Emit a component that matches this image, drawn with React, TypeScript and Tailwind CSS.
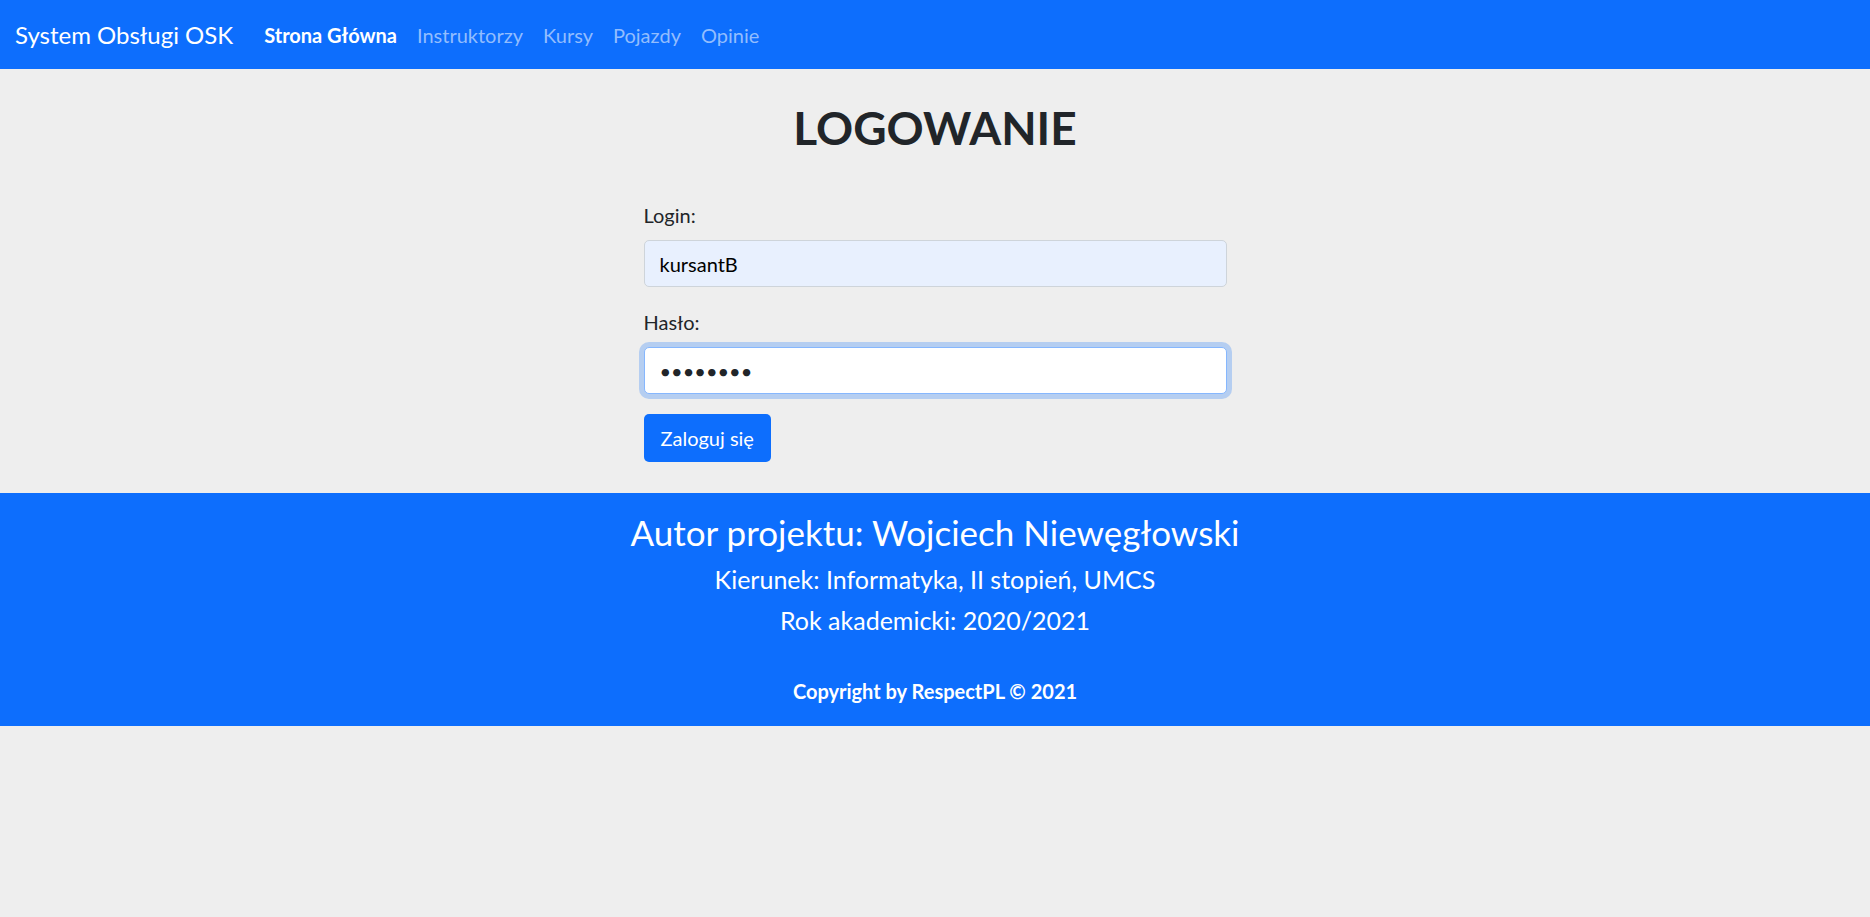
import { useState } from 'react';

const NAV_LINKS = [
  { label: 'Strona Główna', active: true },
  { label: 'Instruktorzy', active: false },
  { label: 'Kursy', active: false },
  { label: 'Pojazdy', active: false },
  { label: 'Opinie', active: false }
];

function Navbar() {
  return (
    <nav className="flex h-[69px] items-center bg-[#0d6efd] px-[15px]">
      <span className="mr-[21px] text-[24px] leading-[38px] text-white">System Obsługi OSK</span>
      <ul className="flex items-center">
        {NAV_LINKS.map((link) => (
          <li key={link.label}>
            <a
              href="#"
              className={`block px-[10px] text-[20px] leading-[30px] ${
                link.active ? 'font-bold text-white' : 'text-[#92bdfe]'
              }`}
            >
              {link.label}
            </a>
          </li>
        ))}
      </ul>
    </nav>
  );
}

function LoginForm() {
  const [login, setLogin] = useState('kursantB');
  const [password, setPassword] = useState('tajne123');

  return (
    <form className="mx-auto mt-[42px] w-[583px]" onSubmit={(e) => e.preventDefault()}>
      <label className="mb-[10px] block text-[20px] leading-[30px] text-[#212529]">Login:</label>
      <input
        type="text"
        value={login}
        onChange={(e) => setLogin(e.target.value)}
        className="mb-[20px] block h-[47px] w-full rounded-[5px] border border-[#ced4da] bg-[#e8f0fe] px-[15px] text-[20px] text-black outline-none"
      />
      <label className="mb-[10px] block text-[20px] leading-[30px] text-[#212529]">Hasło:</label>
      <input
        type="password"
        value={password}
        onChange={(e) => setPassword(e.target.value)}
        className="mb-[20px] block h-[47px] w-full rounded-[5px] border border-[#86b7fe] bg-white px-[15px] text-[20px] text-[#212529] shadow-[0_0_0_5px_rgba(13,110,253,0.25)] outline-none"
      />
      <button
        type="submit"
        className="block h-[48px] rounded-[5px] bg-[#0d6efd] px-[17px] text-[20px] leading-[30px] text-white"
      >
        Zaloguj się
      </button>
    </form>
  );
}

export default function App() {
  return (
    <div className="min-h-[917px] bg-[#eeeeee] font-['Trebuchet_MS',Lato,sans-serif]">
      <Navbar />

      <main className="pb-[31px] pt-[29px]">
        <h1 className="text-center text-[46px] font-bold leading-[60px] text-[#212529]">LOGOWANIE</h1>
        <LoginForm />
      </main>

      <footer className="bg-[#0d6efd] pb-[20px] pt-[18px] text-center text-white">
        <h3 className="mb-[6px] text-[35px] leading-[42px]">Autor projektu: Wojciech Niewęgłowski</h3>
        <p className="text-[25px] leading-[41px]">Kierunek: Informatyka, II stopień, UMCS</p>
        <p className="text-[25px] leading-[41px]">Rok akademicki: 2020/2021</p>
        <p className="mt-[35px] text-[20px] font-bold leading-[30px]">Copyright by RespectPL © 2021</p>
      </footer>
    </div>
  );
}
